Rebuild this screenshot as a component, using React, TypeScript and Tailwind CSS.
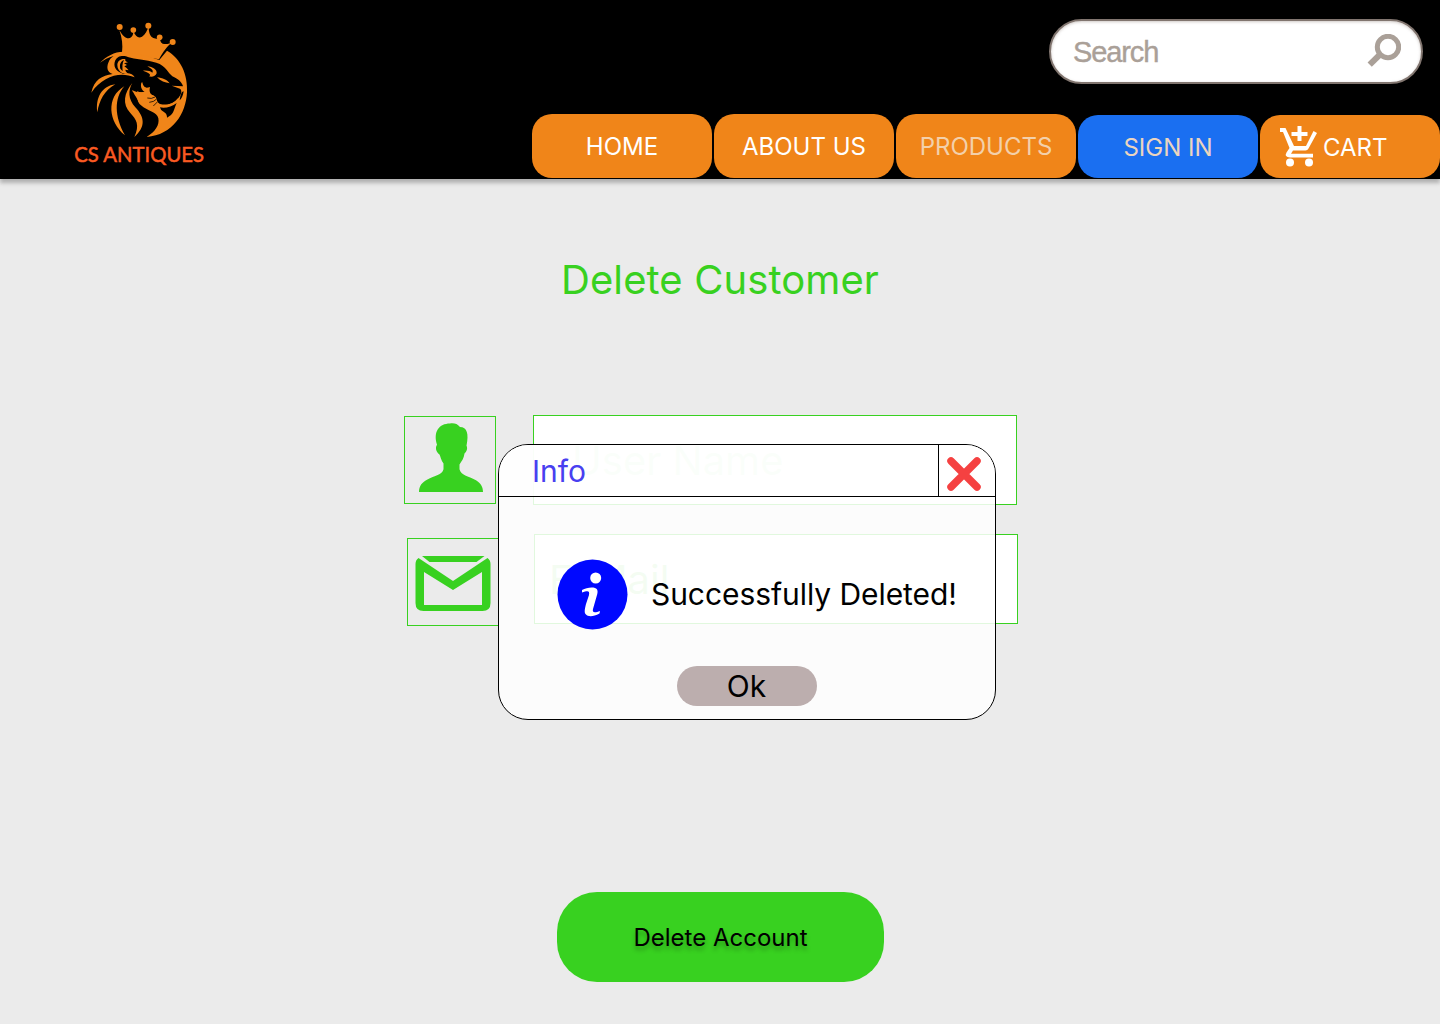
import React from "react";

function LionLogo() {
  return (
    <svg width="160" height="170" viewBox="0 0 480 510" fill="#f08519">
      <path d="M178 60 C188 78 198 86 206 85 C216 83 220 75 220 62 C226 80 236 86 246 80 C256 74 262 62 266 48 C266 68 270 80 280 84 C290 88 297 86 299 82 C300 92 302 98 308 101 C318 104 330 101 338 96 C322 106 308 128 297 148 L262 142 L186 128 C189 104 186 84 178 60 Z" />
      <circle cx="179" cy="51" r="9" />
      <circle cx="220" cy="60" r="8.5" />
      <circle cx="265" cy="47" r="9" />
      <circle cx="299" cy="82" r="8.5" />
      <circle cx="338" cy="96" r="9" />
      <path d="M321 122 C362 145 384 194 381 247 C378 311 338 375 260 381 C286 365 299 345 295 325 C291 305 262 304 243 286 C231 275 229 262 234 255 C224 252 217 247 217 241 C226 246 232 244 236 240 L240 205 L190 190 C182 188 177 180 183 174 L170 160 L186 125 L262 138 L298 150 Z" />
      <path fill="#000" d="M206 142 C248 153 287 151 308 168 C324 180 326 193 343 202 C358 209 367 220 369 229 L335 227 L360 236 C367 242 364 252 357 261 C348 278 325 288 300 282 C286 275 292 261 278 256 C263 250 266 240 268 235 C256 235 248 228 247 215 C240 232 256 243 265 241 C252 248 240 249 231 243 L236 256 C229 262 231 275 240 286 L222 262 L214 212 L224 203 C205 192 180 195 170 185 C158 172 160 150 174 142 C184 136 196 137 206 142 Z" />
      <path d="M249 182 C263 181 272 184 277 188 C282 180 272 175 262 169 C278 171 291 178 290 190 C287 198 276 203 267 199 C276 194 266 188 249 182 Z M291 202 C307 203 323 211 329 220 C315 218 302 213 291 202 Z" />
      <path d="M196 147 C182 145 172 153 172 165 C172 175 177 184 186 189 L208 193 C201 189 197 185 196 179 L206 181 C202 176 198 172 193 169 L201 165 L192 160 L204 157 C198 155 194 152 196 147 Z" />
      <path fill="#000" d="M192 150 C182 154 178 163 181 176 L188 184 C187 172 186 160 192 150 Z" />
      <path d="M245 216 C247 232 256 236 270 231 C266 247 272 254 282 257 C292 263 289 272 294 279 L304 288 L285 297 C266 293 243 286 232 268 C226 258 221 250 217 241 C230 248 238 247 255 247 C244 239 240 228 245 216 Z" />
      <path fill="none" stroke="#000" strokeWidth="2.3" d="M262 264 Q274 268 285 261 M268 277 Q282 276 290 267 M280 288 L293 275" />
      <path fill="#000" d="M300 292 C315 296 336 290 350 279 C343 294 343 305 333 315 L321 323 C322 309 312 307 303 299 Z M366 246 L371 244 C369 258 364 267 359 271 C361 262 360 255 366 246 Z" />
      <path fill="none" stroke="#f08519" strokeWidth="4" d="M296 286 Q334 293 356 265" />
      <path d="M120 158 C139 139 163 125 190 125 L205 139 C186 132 171 139 166 151 C159 167 165 184 189 191 C209 188 218 192 224 202 C180 184 129 198 94 248 C102 210 126 196 158 192 C142 187 139 173 145 158 C149 147 154 143 161 138 C145 142 132 150 120 158 Z" />
      <path d="M166 223 C133 242 118 271 112 307 C106 263 126 228 166 223 Z" />
      <path d="M193 229 C162 264 163 320 195 376 C145 337 137 261 193 229 Z" />
      <path d="M217 219 C204 241 204 267 226 292 C253 321 259 349 223 381 C240 344 229 329 211 309 C186 282 192 249 217 219 Z" />
      <text x="43" y="455" textLength="389" lengthAdjust="spacingAndGlyphs" fill="#fa5a22" stroke="#fa5a22" strokeWidth="1.5" fontFamily="Lato" fontSize="62" fontWeight="400">CS ANTIQUES</text>
    </svg>
  );
}

function NavTab({ label, className = "" }: { label: string; className?: string }) {
  return (
    <a className={`flex w-[180px] items-center justify-center rounded-[20px] text-[24px] ${className}`}>
      {label}
    </a>
  );
}

function SearchBar() {
  return (
    <div className="mt-[19px] mr-[17px] flex h-[65px] w-[374px] items-center justify-between rounded-full border-2 border-[#81756f] bg-white pr-5 pl-[22px] shadow-[inset_0_1px_3px_#8a7a7266]">
      <span className="pt-0.5 font-['Liberation_Sans'] text-[29px] tracking-[-1.1px] text-[#aaa098] [-webkit-text-stroke:0.4px_#aaa098]">Search</span>
      <svg width="34" height="34" viewBox="0 0 34 34" fill="none" stroke="#aaa098" className="relative -top-px">
        <circle cx="21" cy="13" r="10.7" strokeWidth="5" />
        <path d="M13.5 20 L2.7 30.7" strokeWidth="6" />
      </svg>
    </div>
  );
}

function Header() {
  return (
    <header className="flex h-[179px] justify-between bg-black shadow-[0_4px_4px_#00000040]">
      <div className="pt-[10px] pl-[60px]"><LionLogo /></div>
      <div className="flex flex-col items-end justify-between">
        <SearchBar />
        <nav className="flex items-end gap-[2px] pb-px text-white">
          <NavTab label="HOME" className="h-16 bg-[#f08519] pt-px" />
          <NavTab label="ABOUT US" className="h-16 bg-[#f08519] pt-px" />
          <NavTab label="PRODUCTS" className="h-16 bg-[#f08519] pt-px text-[#f3d0ab]" />
          <NavTab label="SIGN IN" className="h-[63px] bg-[#1a6ff1] pt-[3px] text-[#ecd5bf]" />
          <a className="flex h-[63px] w-[180px] items-center rounded-[20px] bg-[#f08519] pl-[19px] text-[24px]">
            <svg width="40" height="42" viewBox="0 0 40 42" fill="white">
              <path d="M18.500 0h4v6h6v4h-6v5h-4v-5h-6V6h6zM1 2h5.500L15 20h12l7.500-15 3.500 2-8.500 15.500Q28.500 24.500 26.500 24.500H14l-2 3.200h22v3.800H11Q5 31 7.500 26.500l3-4.500L4 6H1z" />
              <circle cx="11" cy="36.500" r="4" /><circle cx="30" cy="36.500" r="4" />
            </svg>
            <span className="ml-1 pt-[3px]">CART</span>
          </a>
        </nav>
      </div>
    </header>
  );
}

function InfoDialog() {
  return (
    <div role="dialog" className="absolute top-[444px] left-[498px] flex h-[276px] w-[498px] flex-col overflow-hidden rounded-[30px] border border-black bg-white/85">
      <div className="flex h-[52px] shrink-0 border-b border-black bg-white/80">
        <div className="flex-1 pt-[5px] pl-[33px] text-[30px] leading-[42px] text-[#4840f0]">Info</div>
        <button className="flex w-[57px] items-center justify-center border-l border-black pt-[7px] pr-[7px]">
          <svg width="36" height="36" viewBox="0 0 36 36" stroke="#f54141" strokeWidth="7.500" strokeLinecap="round">
            <path d="M5 5 L31 31 M31 5 L5 31" />
          </svg>
        </button>
      </div>
      <div className="flex items-center pt-[62px] pl-[58px]">
        <svg width="71" height="71" viewBox="0 0 71 71" className="shrink-0">
          <circle cx="35.500" cy="35.500" r="35" fill="#0008ff" />
          <circle cx="38.700" cy="19" r="5.500" fill="white" />
          <path fill="white" d="M25 31 C29 29 34 28 38 29 C41 30 41 33 40 36 L36 50 C35 54 38 54 43 52 L42.500 54.500 C36 58 31 58 28.500 55 C27 53 28 49 29 45 L32 36 C33 31 30 32 25 33.500 Z" />
        </svg>
        <span className="ml-[23px] pb-0.5 text-[30px] leading-9 tracking-[-0.06px] whitespace-nowrap">Successfully Deleted!</span>
      </div>
      <button className="mt-[36px] ml-[178px] h-10 w-[140px] shrink-0 rounded-full bg-[#bcaeae] pr-px text-[30px] leading-10">Ok</button>
    </div>
  );
}

export default function App() {
  return (
    <div className="relative flex h-[1024px] w-[1440px] flex-col overflow-hidden bg-[#ebebeb] font-['Inter',sans-serif] text-black">
      <Header />
      <main className="flex flex-1 flex-col">
        <h1 className="mt-[76px] text-center text-[40px] leading-[50px] tracking-[0.1px] text-[#38d120]">Delete Customer</h1>
        <form className="mt-[110px]">
          <div className="ml-[404px] flex items-center">
            <div className="flex h-[88px] w-[92px] justify-center border border-[#38d120] pt-1.5 pl-0.5">
              <svg width="66" height="70" viewBox="0 0 66 71" preserveAspectRatio="none" fill="#38d120">
                <path d="M1 70 C1 64 4 60 9 57.500 C17 53 24 53 25.500 47 V41 C23 38 22.500 34 21.500 32 C18 29 17 25 19 22 C15 9 21 .5 32 .5 C37 0 39 1 42 4 C49 4 51 11 48.500 23 C50 26 48.500 29 46.500 31 C46 36 43.500 39 41.500 42 V47 C43 53 50 54 58 58 C63 61 65 65 65 70 Z" />
              </svg>
            </div>
            <div className="ml-[37px] flex h-[90px] w-[484px] items-center border border-[#38d120] bg-white pt-0.5 pl-[38px] text-[40px] text-[#38d120]/80">User Name</div>
          </div>
          <div className="mt-[29px] ml-[407px] flex">
            <div className="mt-1 h-[88px] w-[92px] border border-[#38d120] pt-[17px] pl-[7px]">
              <svg width="76" height="55" viewBox="0 0 75 55" fill="#38d120">
                <path d="M6.500 0H69L61 6H14Z" />
                <path fillRule="evenodd" d="M3 2 L37.500 25 L72 2 Q75 4 75 8V47Q75 55 67 55H8Q0 55 0 47V8Q0 4 3 2 M8.500 16V49H66.500V16L37.500 34Z" />
              </svg>
            </div>
            <div className="ml-[35px] flex h-[90px] w-[484px] items-center border border-[#38d120] bg-white pt-0.5 pl-[14px] text-[40px] text-[#38d120]/40">E-Mail</div>
          </div>
        </form>
        <button className="mt-[266px] ml-[557px] h-[90px] w-[327px] rounded-[40px] bg-[#38d120] pt-0.5 text-[24px] [text-shadow:0_4px_4px_#00000040]">Delete Account</button>
      </main>
      <InfoDialog />
    </div>
  );
}
